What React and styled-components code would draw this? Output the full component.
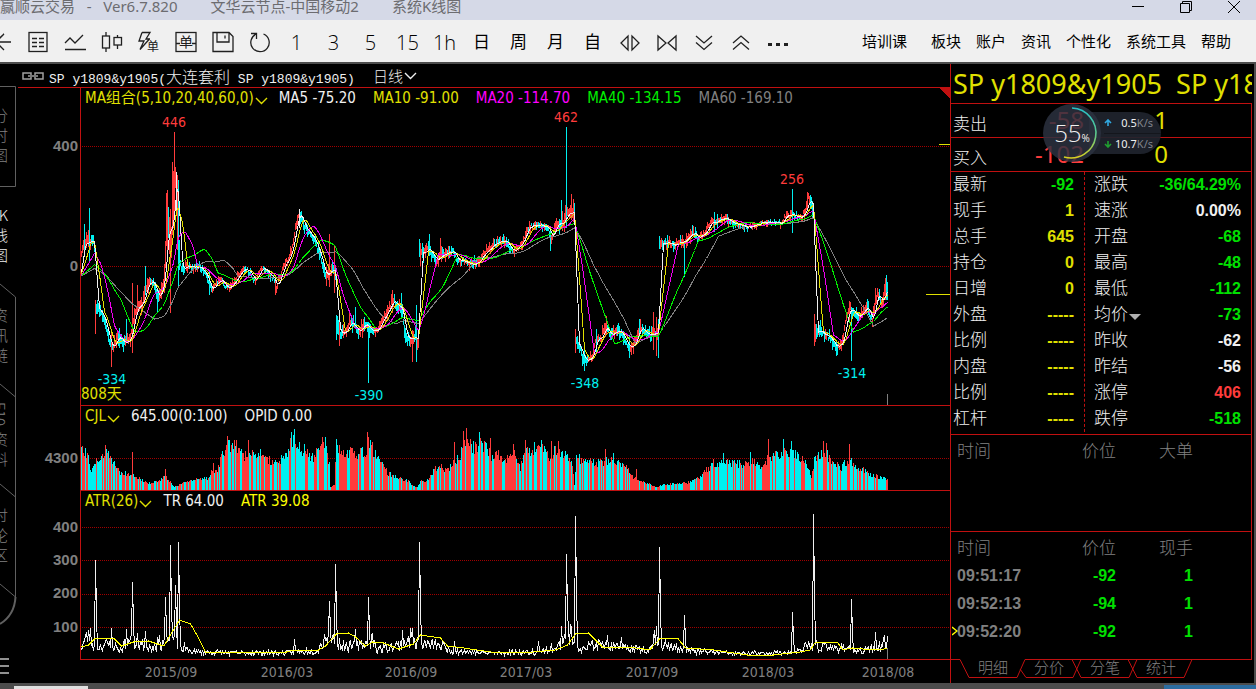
import React from 'react'
import styled, { createGlobalStyle } from 'styled-components'

const red = '#ff3c3c'
const cyan = '#00f0f0'
const line = '#c01010'
const yellow = '#e0e000'
const green = '#00e000'
const white = '#f0f0f0'
const gray = '#808080'

const latin = '"Noto Sans", "Noto Sans CJK SC", sans-serif'
const tahoma = '"DejaVu Sans Condensed", "Noto Sans", "Noto Sans CJK SC", sans-serif'
const cjk = '"Noto Sans CJK SC", sans-serif'
const arial = '"Liberation Sans", "Noto Sans CJK SC", sans-serif'

const GlobalStyle = createGlobalStyle`
  * {
    box-sizing: border-box;
  }
  body {
    margin: 0;
    background: #000;
    font-family: ${cjk};
    font-weight: 300;
  }
  button {
    padding: 0;
    border: 0;
    background: none;
    color: inherit;
    font: inherit;
    cursor: pointer;
  }
`

/* ---------- series ---------- */

const W = 869
const LEFT = 81
const DAYS = 807

const makeRandom = seed => () => {
  seed = (seed * 1664525 + 1013904223) % 4294967296
  return seed / 4294967296
}

const interpolate = (points, x) => {
  if (x <= points[0][0]) return points[0][1]
  for (let i = 1; i < points.length; i++) {
    const [x0, y0] = points[i - 1]
    const [x1, y1] = points[i]
    if (x <= x1) return y0 + ((y1 - y0) * (x - x0)) / (x1 - x0)
  }
  return points[points.length - 1][1]
}

const CLOSES = [
  [81, 255], [83, 245], [90, 241], [94, 243], [95, 305], [100, 312], [105, 323], [109, 343],
  [112, 350], [117, 337], [120, 340], [125, 343], [130, 337], [133, 320], [137, 307], [142, 303],
  [145, 290], [148, 283], [153, 283], [157, 297], [160, 293], [163, 283], [166, 243], [168, 225],
  [171, 235], [173, 205], [175, 175], [177, 190], [179, 262], [182, 270], [187, 266], [193, 267],
  [200, 268], [205, 273], [208, 283], [211, 290], [217, 283], [222, 280], [225, 287], [230, 288],
  [235, 280], [240, 273], [245, 268], [250, 273], [254, 280], [262, 268], [267, 273], [273, 277],
  [276, 287], [280, 275], [287, 260], [292, 247], [295, 227], [298, 214], [300, 216], [305, 228],
  [310, 235], [315, 242], [320, 257], [325, 277], [328, 273], [332, 270], [335, 273], [336, 323],
  [340, 333], [345, 332], [350, 321], [355, 327], [358, 333], [365, 323], [368, 328], [373, 332],
  [378, 328], [383, 318], [388, 310], [393, 300], [398, 307], [402, 310], [404, 330], [408, 340],
  [413, 337], [418, 340], [419, 250], [423, 253], [428, 248], [433, 257], [437, 262], [440, 255],
  [447, 253], [453, 252], [457, 260], [465, 262], [473, 265], [478, 262], [485, 253], [492, 245],
  [498, 242], [507, 243], [512, 252], [517, 247], [523, 240], [527, 228], [537, 225], [547, 227],
  [551, 237], [557, 225], [563, 222], [567, 213], [574, 211], [575, 340], [580, 350], [583, 358],
  [587, 362], [592, 357], [595, 340], [600, 340], [605, 327], [610, 335], [617, 330], [622, 335],
  [627, 345], [630, 348], [635, 343], [639, 328], [643, 330], [650, 335], [658, 333], [659, 243],
  [667, 243], [675, 245], [683, 242], [688, 238], [693, 233], [698, 238], [705, 232], [710, 223],
  [717, 221], [725, 217], [733, 223], [747, 227], [767, 222], [780, 223], [785, 217], [792, 214],
  [800, 219], [805, 210], [808, 199], [813, 207], [814, 333], [820, 332], [830, 338], [835, 348],
  [842, 343], [846, 317], [850, 307], [857, 317], [867, 308], [872, 321], [875, 300], [878, 294],
  [882, 303], [885, 290], [888, 288],
]

// how far a bar reaches from its close
const RANGES = [
  [81, 11], [90, 16], [100, 11], [120, 10], [135, 12], [150, 10], [160, 12], [166, 24], [176, 30],
  [180, 9], [190, 6], [280, 6], [295, 9], [310, 7], [320, 10], [335, 12], [350, 10], [380, 9],
  [404, 12], [425, 11], [437, 9], [450, 7], [520, 7], [550, 7], [565, 12], [576, 12], [590, 7],
  [610, 9], [640, 10], [655, 12], [665, 9], [680, 9], [700, 7], [715, 8], [735, 5], [780, 5],
  [800, 7], [815, 11], [840, 8], [860, 8], [880, 11], [888, 11],
]

// [x, top, bottom, colour] of the single days that stick out
const SPIKES = [
  [89, 208, 262, cyan], [84, 224, 250, cyan], [95, 300, 334, red], [111, 330, 367, red],
  [126, 319, 343, cyan], [132, 283, 353, red], [137, 285, 312, red], [145, 266, 295, cyan],
  [157, 290, 313, cyan], [166, 193, 246, red], [167, 190, 250, red], [168, 207, 238, cyan],
  [170, 209, 313, red], [172, 162, 235, red], [173, 171, 228, red], [174, 132, 220, red],
  [176, 172, 210, white], [177, 175, 250, red], [178, 180, 287, cyan], [179, 240, 270, cyan],
  [209, 272, 295, cyan], [275, 276, 295, red], [299, 209, 228, white], [329, 234, 287, red],
  [334, 245, 293, red], [336, 315, 340, cyan], [339, 316, 346, red], [355, 307, 328, cyan],
  [368, 322, 383, cyan], [392, 290, 313, red], [401, 293, 318, cyan], [412, 330, 362, red],
  [416, 305, 362, cyan], [419, 239, 257, cyan], [420, 243, 266, red], [429, 234, 256, cyan],
  [440, 238, 258, red], [550, 226, 251, cyan], [561, 200, 228, cyan], [566, 127, 228, cyan],
  [571, 194, 220, red], [573, 199, 222, red], [575, 329, 353, red], [584, 345, 371, cyan],
  [596, 329, 352, cyan], [606, 316, 335, red], [629, 335, 358, cyan], [639, 319, 334, cyan],
  [653, 312, 350, red], [656, 317, 356, red], [658, 319, 358, cyan], [659, 236, 249, cyan],
  [684, 243, 277, cyan], [714, 212, 232, cyan], [792, 189, 233, cyan], [807, 192, 210, red],
  [814, 314, 346, red], [815, 324, 342, red], [836, 340, 356, cyan], [849, 301, 320, red],
  [851, 307, 361, cyan], [875, 288, 305, red], [885, 278, 300, red], [886, 275, 300, cyan],
  [887, 282, 300, cyan],
]

const VOLUMES = [
  [81, 42], [87, 37], [91, 20], [95, 30], [100, 33], [106, 43], [110, 33], [115, 25], [121, 17],
  [133, 16], [140, 11], [150, 7], [158, 10], [165, 15], [171, 7], [174, 3], [183, 8], [193, 10],
  [200, 12], [207, 12], [212, 20], [217, 20], [222, 37], [227, 46], [237, 45], [243, 35],
  [257, 37], [267, 33], [273, 27], [283, 33], [288, 43], [293, 53], [298, 47], [307, 38],
  [313, 33], [318, 42], [325, 48], [329, 27], [330, 3], [334, 5], [336, 48], [343, 40],
  [352, 38], [366, 40], [368, 53], [373, 38], [380, 30], [387, 18], [397, 13], [408, 10],
  [413, 4], [417, 3], [420, 10], [428, 10], [432, 18], [438, 25], [447, 20], [453, 30],
  [460, 33], [463, 56], [468, 48], [475, 43], [480, 48], [487, 42], [492, 33], [498, 36],
  [503, 32], [513, 38], [520, 23], [525, 38], [532, 43], [542, 45], [548, 35], [555, 40],
  [563, 38], [572, 25], [574, 5], [576, 33], [587, 30], [600, 28], [610, 32], [623, 28],
  [628, 22], [633, 12], [647, 7], [655, 3], [667, 6], [680, 7], [690, 8], [700, 14], [707, 22],
  [713, 28], [727, 28], [740, 27], [753, 29], [761, 24], [770, 36], [783, 38], [793, 38],
  [802, 33], [811, 14], [815, 35], [825, 39], [830, 32], [840, 23], [850, 32], [860, 22],
  [870, 16], [887, 11],
]

const SPIKES_VOLUME = [
  [105, 45], [132, 38], [165, 21], [213, 27], [227, 54], [248, 50], [260, 41], [291, 58], [294, 61],
  [322, 53], [367, 58], [370, 50], [372, 48], [454, 48], [463, 59], [466, 62], [479, 58], [490, 52],
  [513, 46], [525, 50], [541, 50], [551, 49], [558, 49], [605, 41], [613, 37], [636, 21],
  [723, 37], [750, 38], [768, 51], [783, 51], [791, 49], [823, 49], [826, 47], [849, 46],
]

const RANGE_TR = [
  [81, 12], [85, 20], [89, 28], [93, 12], [110, 15], [120, 8], [127, 20], [135, 16], [150, 12],
  [165, 20], [178, 16], [181, 9], [195, 6], [240, 5], [280, 5], [300, 6], [318, 8], [325, 26],
  [336, 18], [345, 12], [360, 14], [372, 20], [377, 9], [400, 14], [410, 22], [423, 14],
  [440, 14], [450, 8], [480, 5], [540, 6], [558, 12], [572, 28], [578, 12], [605, 14],
  [620, 10], [650, 10], [656, 30], [661, 14], [680, 10], [690, 7], [740, 4], [780, 5],
  [800, 7], [810, 15], [820, 12], [830, 10], [840, 12], [847, 12], [855, 5], [870, 10],
  [880, 13], [887, 18],
]

const SPIKES_TR = [
  [95, 560], [111, 628], [126, 629], [132, 582], [137, 633], [145, 631], [165, 597], [170, 545],
  [175, 585], [178, 542], [184, 642], [294, 639], [329, 601], [335, 564], [355, 629], [368, 597],
  [372, 633], [402, 630], [412, 628], [419, 542], [454, 641], [538, 641], [551, 643], [561, 626],
  [566, 554], [571, 628], [575, 516], [592, 640], [607, 635], [621, 637], [659, 547], [668, 642],
  [684, 615], [792, 612], [813, 514], [851, 599], [875, 632],
]

const ATR = [
  [81, 647], [88, 645], [95, 638], [113, 638], [121, 646], [133, 642], [148, 641], [160, 645],
  [164, 645], [171, 633], [179, 620], [190, 624], [197, 636], [205, 652], [223, 652], [286, 652],
  [293, 650], [318, 650], [325, 646], [336, 634], [348, 633], [355, 637], [365, 646], [372, 642],
  [383, 643], [398, 649], [413, 644], [420, 635], [440, 638], [447, 646], [463, 648], [490, 652],
  [510, 653], [533, 652], [555, 650], [567, 645], [575, 634], [588, 633], [602, 647], [628, 647],
  [643, 649], [650, 649], [660, 638], [677, 638], [685, 648], [713, 650], [747, 655], [773, 655],
  [800, 652], [810, 650], [815, 642], [837, 642], [842, 650], [852, 648], [862, 649], [880, 650],
  [887, 648],
]

const days = Array.from({ length: DAYS }, (_, i) => i)

const buildCandles = () => {
  const rnd = makeRandom(11)
  const spikes = new Map(SPIKES.map(s => [s[0], s]))
  const closes = Array.from({ length: 60 }, () => 276)
  const bars = days.map(i => {
    const x = i + LEFT
    const range = interpolate(RANGES, x)
    const close = interpolate(CLOSES, x) + (rnd() - 0.5) * 4
    closes.push(close)
    const up = range * (0.2 + rnd() * rnd())
    const down = range * (0.2 + rnd() * rnd())
    const trend = interpolate(CLOSES, x + 2) - interpolate(CLOSES, x - 2)
    const color = rnd() * 8 - 4 > trend ? red : cyan
    const spike = spikes.get(x)
    return spike
      ? { i, top: spike[1], bottom: spike[2], color: spike[3] }
      : { i, top: Math.round(close - up), bottom: Math.round(close + down), color }
  })
  return { bars, closes }
}

const buildVolumes = () => {
  const rnd = makeRandom(5)
  const spikes = new Map(SPIKES_VOLUME)
  let color = red
  return days.map(i => {
    const x = i + LEFT
    const mid = interpolate(VOLUMES, x)
    if (rnd() < 0.42) color = color === red ? cyan : red
    const noisy = Math.max(1, Math.round(mid * (0.8 + rnd() * 0.32)))
    return { i, top: 490 - (spikes.get(x) || noisy), bottom: 490, color }
  })
}

const buildTr = () => {
  const rnd = makeRandom(23)
  const spikes = new Map(SPIKES_TR)
  return days.map(i => {
    const x = i + LEFT
    if (spikes.has(x)) return [x, spikes.get(x)]
    if (spikes.has(x - 1)) return [x, Math.round(659 - (659 - spikes.get(x - 1)) * 0.45)]
    const mid = interpolate(RANGE_TR, x)
    return [x, Math.round(657 - mid * (0.4 + rnd() * 0.9))]
  })
}

const sticks = (bars, color, top) =>
  bars
    .filter(b => b.color === color)
    .map(b => `M${b.i} ${b.top - top}h1V${b.bottom - top}h-1z`)
    .join('')

const polyline = (points, top) =>
  points.map(([x, y]) => `${(x - LEFT + 0.5).toFixed(1)},${(y - top).toFixed(1)}`).join(' ')

const average = (closes, n) =>
  days.map(i => {
    const part = closes.slice(61 + i - n, 61 + i)
    return [i + LEFT, part.reduce((a, b) => a + b, 0) / n]
  })

const { bars, closes } = buildCandles()
const volumes = buildVolumes()
const tr = buildTr()

const AVERAGES = [
  [60, gray],
  [40, '#00f000'],
  [20, '#f000f0'],
  [10, yellow],
  [5, white],
]

/* ---------- window frame ---------- */

const Page = styled.div`
  display: flex;
  flex-direction: column;
  min-height: 100vh;
  overflow: hidden;
  background: #000;
`

const TitleBar = styled.header`
  display: flex;
  align-items: flex-start;
  justify-content: space-between;
  height: 20px;
  overflow: hidden;
  background: #d5d9e7;
  color: #6c6c70;
  font-family: ${latin};
  font-size: 15px;
  line-height: 13px;
  font-weight: 400;
  white-space: pre;
`

const Titles = styled.div`
  display: flex;
  gap: 33px;
`

const WindowButtons = styled.div`
  display: flex;
  gap: 32px;
  padding-right: 14px;
  color: #000;
  button {
    width: 16px;
    height: 14px;
  }
  svg {
    display: block;
  }
`

const Toolbar = styled.nav`
  display: flex;
  justify-content: space-between;
  height: 44px;
  background: #f0f0f0;
  border-bottom: 2px solid #4c4c4c;
  color: #000;
`

const Tools = styled.div`
  display: flex;
`

const Tool = styled.button`
  display: flex;
  align-items: center;
  justify-content: ${p => (p.$edge ? 'flex-start' : 'center')};
  width: ${p => (p.$edge ? 19 : 37)}px;
  height: 42px;
  padding-top: ${p => (p.$digit ? 4 : 1)}px;
  font-family: "Open Sans", ${cjk};
  font-size: ${p => (p.$digit ? 20 : 17)}px;
  font-weight: ${p => (p.$digit ? 300 : 400)};
  line-height: 20px;
  svg {
    display: block;
    flex: none;
  }
`

const Menu = styled.div`
  display: flex;
  align-items: center;
  gap: 15px;
  padding: 0 25px 2px 0;
  font-size: 15px;
  font-weight: 400;
  white-space: nowrap;
  button:first-child {
    margin-right: 9px;
  }
`

const Main = styled.main`
  display: flex;
  flex: 1;
  border-right: 2px solid #4c4c4c;
`

const Footer = styled.footer`
  display: flex;
  align-items: flex-end;
  justify-content: space-between;
  height: 6px;
  padding-left: 14px;
  background: #4c4c4c;
`

const ScrollThumb = styled.div`
  width: 74px;
  height: 3px;
  background: #e0e0e0;
`

const BlueStrip = styled.div`
  width: 92px;
  height: 4px;
  background: #2c6ca0;
`

/* ---------- left rail ---------- */

const Rail = styled.aside`
  position: relative;
  display: flex;
  flex-direction: column;
  width: 18px;
  padding-top: 22px;
  overflow: hidden;
`

const RailFrame = styled.svg`
  position: absolute;
  top: 0;
  left: 0;
`

const RailTab = styled.button`
  display: flex;
  flex-direction: column;
  align-items: flex-end;
  justify-content: center;
  gap: 5px;
  width: 8px;
  height: 100px;
  padding-bottom: 4px;
  color: ${p => (p.$active ? white : gray)};
  font-size: 15px;
  line-height: 15px;
`

const Sideways = styled.span`
  writing-mode: vertical-rl;
`

/* ---------- charts ---------- */

const Charts = styled.section`
  display: flex;
  flex: 1;
  flex-direction: column;
  min-width: 0;
`

const ChartTitle = styled.div`
  display: flex;
  align-items: center;
  gap: 5px;
  height: 24px;
  padding-left: 4px;
  border-bottom: 1px solid ${line};
  color: ${white};
  font-family: "Liberation Mono", ${cjk};
  font-size: 13px;
  white-space: pre;
`

const Wide = styled.span`
  font-size: 16px;
`

const Period = styled.button`
  display: flex;
  align-items: center;
  gap: 1px;
  margin-left: 13px;
  font-size: 15px;
`

const Pane = styled.div`
  display: flex;
  height: ${p => p.$height}px;
`

const Axis = styled.div`
  position: relative;
  width: 62px;
  color: ${gray};
  font: bold 15px/16px ${arial};
`

const Tick = styled.span`
  position: absolute;
  right: 2px;
`

const Plot = styled.div`
  position: relative;
  flex: 1;
  border-left: 1px solid ${line};
  border-bottom: 1px solid ${line};
`

const Drawing = styled.svg`
  position: absolute;
  inset: 0;
  display: block;
  width: 100%;
  height: 100%;
  shape-rendering: crispEdges;
`

const Legend = styled.div`
  position: relative;
  display: flex;
  gap: 17px;
  padding-left: 4px;
  font: 400 15px/20px ${tahoma};
  white-space: nowrap;
`

const Indicator = styled.button`
  display: flex;
  align-items: center;
  gap: 1px;
  margin-right: -6px;
  color: ${yellow};
  svg {
    margin-top: 6px;
  }
`

const Entry = styled.span`
  color: ${p => p.$color};
`

const Mark = styled.span`
  position: absolute;
  color: ${p => p.$color};
  font: 400 14px/16px ${tahoma};
  transform: translate(-50%, -50%);
`

const DayCount = styled.span`
  position: absolute;
  bottom: 1px;
  left: 0;
  color: ${yellow};
  font: 400 15px/20px ${tahoma};
`

const Dates = styled.div`
  position: relative;
  height: 23px;
  margin-left: 63px;
`

const Caret = ({ color = 'currentColor' }) => (
  <svg width="13" height="8" viewBox="0 0 13 8" fill="none" stroke={color} strokeWidth="1.4">
    <path d="M1 1l5.5 5.5L12 1" />
  </svg>
)

const Grid = ({ rows }) =>
  rows.map(y => (
    <line key={y} x1="1" x2={W} y1={y + 0.5} y2={y + 0.5} stroke="#a00000" strokeDasharray="1 1" />
  ))

const LEGEND = [
  ['MA5 -75.20', white],
  ['MA10 -91.00', yellow],
  ['MA20 -114.70', '#ff00ff'],
  ['MA40 -134.15', '#00f000'],
  ['MA60 -169.10', gray],
]

const MARKS = [
  ['446', 174, 122, red],
  ['-334', 112, 379, cyan],
  ['-390', 369, 395, cyan],
  ['462', 566, 117, red],
  ['-348', 585, 383, cyan],
  ['256', 792, 179, red],
  ['-314', 852, 373, cyan],
]

const DATES = [
  ['2015/09', 171],
  ['2016/03', 287],
  ['2016/09', 411],
  ['2017/03', 526],
  ['2017/09', 652],
  ['2018/03', 768],
  ['2018/08', 888],
]

const percent = x => `${((x - LEFT) / W) * 100}%`

const PriceChart = () => (
  <Pane $height={318}>
    <Axis>
      <Tick style={{ top: 50 }}>400</Tick>
      <Tick style={{ top: 170 }}>0</Tick>
    </Axis>
    <Plot>
      <Drawing viewBox={`0 0 ${W} 317`} preserveAspectRatio="none">
        <Grid rows={[58, 178]} />
        {[red, cyan, white].map(c => (
          <path key={c} d={sticks(bars, c, 88)} fill={c} />
        ))}
        {AVERAGES.map(([n, c]) => (
          <polyline key={n} points={polyline(average(closes, n), 88)} fill="none" stroke={c} />
        ))}
        <path d="M858 56.5h11M845 206.5h24" stroke={yellow} />
        <path d="M806.5 306v11" stroke={gray} />
        <path d="M857 -1h12v12z" fill={line} />
      </Drawing>
      <Legend>
        <Indicator>
          MA组合(5,10,20,40,60,0)
          <Caret />
        </Indicator>
        {LEGEND.map(([text, color]) => (
          <Entry key={text} $color={color}>{text}</Entry>
        ))}
      </Legend>
      {MARKS.map(([text, x, y, color]) => (
        <Mark key={text} $color={color} style={{ left: percent(x), top: y - 88 }}>{text}</Mark>
      ))}
      <DayCount>808天</DayCount>
    </Plot>
  </Pane>
)

const VolumeChart = () => (
  <Pane $height={85}>
    <Axis>
      <Tick style={{ top: 44 }}>4300</Tick>
    </Axis>
    <Plot>
      <Drawing viewBox={`0 0 ${W} 84`} preserveAspectRatio="none">
        <Grid rows={[52]} />
        <path d={sticks(volumes, red, 406)} fill={red} />
        <path d={sticks(volumes, cyan, 406)} fill={cyan} />
      </Drawing>
      <Legend>
        <Indicator>
          CJL
          <Caret />
        </Indicator>
        <Entry $color={white}>645.00(0:100)</Entry>
        <Entry $color={white}>OPID 0.00</Entry>
      </Legend>
    </Plot>
  </Pane>
)

const AtrChart = () => (
  <Pane $height={169}>
    <Axis>
      {[400, 300, 200, 100].map((n, i) => (
        <Tick key={n} style={{ top: 28 + Math.floor(i * 33.4) }}>{n}</Tick>
      ))}
    </Axis>
    <Plot>
      <Drawing viewBox={`0 0 ${W} 168`} preserveAspectRatio="none">
        <Grid rows={[36, 69, 103, 136]} />
        <polyline points={polyline(tr, 491)} fill="none" stroke={white} />
        <polyline points={polyline(ATR, 491)} fill="none" stroke="#ffff00" />
        <path d="M806.5 157v11" stroke={gray} />
      </Drawing>
      <Legend>
        <Indicator>
          ATR(26)
          <Caret />
        </Indicator>
        <Entry $color={white}>TR 64.00</Entry>
        <Entry $color="#ffff00">ATR 39.08</Entry>
      </Legend>
    </Plot>
  </Pane>
)

/* ---------- quote panel ---------- */

const Quote = styled.section`
  position: relative;
  display: flex;
  flex-direction: column;
  width: 304px;
  padding-right: 2px;
  border-left: 1px solid ${line};
`

const Name = styled.h1`
  margin: 0;
  height: 40px;
  padding-left: 2px;
  overflow: hidden;
  border-bottom: 1px solid ${line};
  color: ${yellow};
  font: 400 27px/40px ${latin};
  white-space: pre;
`

const Boxed = styled.div`
  border-right: 1px solid ${line};
`

const BidAsk = styled.div`
  display: grid;
  grid-template-columns: 58px 73px 84px;
  height: 34px;
  padding-left: 2px;
  border-bottom: 1px solid ${line};
  color: ${white};
  font-size: 17px;
  line-height: 37px;
`

const Big = styled.span`
  color: ${p => p.$color};
  font: 400 24px/31px ${latin};
  text-align: right;
`

const Stats = styled.div`
  display: flex;
  padding-bottom: 2px;
  border-bottom: 1px solid ${line};
`

const StatList = styled.dl`
  flex: ${p => (p.$wide ? '1' : '0 0 134px')};
  margin: 0;
  padding: 0 10px 0 ${p => (p.$wide ? 9 : 2)}px;
  border-right: ${p => (p.$wide ? '0' : `1px dashed ${line}`)};
`

const Stat = styled.div`
  display: flex;
  justify-content: space-between;
  height: 26px;
  color: ${white};
  font-size: 17px;
  line-height: 22px;
  dd {
    margin: 0;
    color: ${p => p.$color};
    font: bold 16px/26px ${arial};
  }
`

const Down = styled.span`
  display: inline-block;
  margin-left: 1px;
  border: 6px solid transparent;
  border-top-color: #b0b0b0;
  border-bottom: 0;
`

const Deals = styled.div`
  height: ${p => p.$height}px;
  padding-top: 2px;
  border-bottom: ${p => (p.$last ? '0' : `1px solid ${line}`)};
`

const DealTable = styled.table`
  width: 242px;
  table-layout: fixed;
  border-collapse: collapse;
  color: ${green};
  text-align: right;
  font: bold 16px/28px ${arial};
  th {
    padding: 0 0 2px;
    color: ${gray};
    font: 300 17px/26px ${cjk};
  }
  td {
    padding: 0;
  }
  th:first-child,
  td:first-child {
    width: 90px;
    padding-left: 6px;
    color: ${gray};
    text-align: left;
  }
  th:nth-child(2),
  td:nth-child(2) {
    width: 75px;
  }
`

const Cursor = styled.svg`
  position: absolute;
  top: 562px;
  left: 1px;
`

const Tabs = styled.div`
  position: relative;
  display: flex;
  height: 24px;
  padding-left: 14px;
  color: ${gray};
  font-size: 15px;
  line-height: 16px;
  button {
    position: relative;
    width: 56px;
    height: 19px;
    padding-bottom: 3px;
  }
`

const TabFrame = styled.svg`
  position: absolute;
  top: 0;
  left: -6px;
`

const LEFT_STATS = [
  ['最新', '-92', green],
  ['现手', '1', yellow],
  ['总手', '645', yellow],
  ['持仓', '0', yellow],
  ['日增', '0', yellow],
  ['外盘', '-----', yellow],
  ['比例', '-----', yellow],
  ['内盘', '-----', yellow],
  ['比例', '-----', yellow],
  ['杠杆', '-----', yellow],
]

const RIGHT_STATS = [
  ['涨跌', '-36/64.29%', green],
  ['速涨', '0.00%', white],
  ['开盘', '-68', green],
  ['最高', '-48', green],
  ['最低', '-112', green],
  ['均价', '-73', green],
  ['昨收', '-62', white],
  ['昨结', '-56', white],
  ['涨停', '406', red],
  ['跌停', '-518', green],
]

const DEALS = [
  ['09:51:17', '-92', '1'],
  ['09:52:13', '-94', '1'],
  ['09:52:20', '-92', '1'],
]

const StatRows = ({ rows, wide }) => (
  <StatList $wide={wide}>
    {rows.map(([label, value, color], i) => (
      <Stat key={i} $color={color}>
        <dt>
          {label}
          {label === '均价' && <Down />}
        </dt>
        <dd>{value}</dd>
      </Stat>
    ))}
  </StatList>
)

const DealRows = ({ last, rows }) => (
  <DealTable>
    <thead>
      <tr>
        <th>时间</th>
        <th>价位</th>
        <th>{last}</th>
      </tr>
    </thead>
    <tbody>
      {rows.map(([time, price, count]) => (
        <tr key={time}>
          <td>{time}</td>
          <td>{price}</td>
          <td>{count}</td>
        </tr>
      ))}
    </tbody>
  </DealTable>
)

/* ---------- floating speed ball ---------- */

const Speed = styled.div`
  position: absolute;
  top: 40px;
  left: 92px;
  display: flex;
  align-items: center;
  width: 118px;
  height: 58px;
`

const Ball = styled.div`
  position: relative;
  z-index: 1;
  display: flex;
  align-items: center;
  justify-content: center;
  width: 58px;
  height: 58px;
  border-radius: 50%;
  background: rgba(44, 50, 64, 0.84);
  color: ${white};
  font: 300 24px/58px "Open Sans", sans-serif;
  small {
    padding-top: 9px;
    font-size: 10px;
    font-weight: 400;
  }
  svg {
    position: absolute;
    inset: 0;
  }
`

const Rates = styled.div`
  flex: 1;
  margin-left: -12px;
  padding-left: 15px;
  border-radius: 0 21px 21px 0;
  background: rgba(32, 36, 46, 0.92);
`

const Rate = styled.div`
  display: flex;
  align-items: center;
  justify-content: space-between;
  height: 21px;
  padding-right: 8px;
  border-top: ${p => (p.$second ? '1px solid #14161c' : '0')};
  color: ${white};
  font: 400 11px/20px ${latin};
  b {
    font-weight: 400;
  }
  i {
    color: #80848c;
    font-style: normal;
  }
`

const Arrow = ({ up }) => (
  <svg width="8" height="8" viewBox="0 0 8 8" fill="none" stroke={up ? '#30a8e0' : '#20a030'} strokeWidth="1.6">
    <path d={up ? 'M4 7V1M1 4l3-3 3 3' : 'M4 1v6M1 4l3 3 3-3'} />
  </svg>
)

const SpeedBall = () => (
  <Speed>
    <Ball>
      <svg width="58" height="58" viewBox="0 0 58 58" fill="none" strokeWidth="1.6">
        <defs>
          <linearGradient id="ring" x1="0" y1="0" x2="0" y2="1">
            <stop offset="0" stopColor="#28c0c8" />
            <stop offset="0.55" stopColor="#60c888" />
            <stop offset="1" stopColor="#d8d020" />
          </linearGradient>
        </defs>
        <path d="M29 4a25 25 0 1 1 -8 49" stroke="url(#ring)" />
      </svg>
      <span>55</span>
      <small>%</small>
    </Ball>
    <Rates>
      <Rate>
        <Arrow up />
        <span><b>0.5</b><i>K/s</i></span>
      </Rate>
      <Rate $second>
        <Arrow />
        <span><b>10.7</b><i>K/s</i></span>
      </Rate>
    </Rates>
  </Speed>
)

/* ---------- toolbar icons ---------- */

const Icon = ({ children, width = 22, height = 22, label }) => (
  <svg
    width={width}
    height={height}
    viewBox={`0 0 ${width} ${height}`}
    fill="none"
    stroke="#202020"
    strokeWidth="1.3"
    role="img"
    aria-label={label}
  >
    {children}
  </svg>
)

const ICON_TOOLS = [
  <Icon label="list">
    <rect x="2" y="1.500" width="18" height="19" />
    <path d="M5 7.500h5M12 7.500h5M5 11.500h5M12 11.500h5M5 15.500h5M12 15.500h5" />
  </Icon>,
  <Icon label="line">
    <path d="M1 12l5-5 5 5 8-8M1 18.500h21" />
  </Icon>,
  <Icon label="candles">
    <rect x="1.500" y="5" width="7" height="12" />
    <rect x="13" y="6.500" width="7.500" height="7.500" />
    <path d="M5 1v4M5 17v4M16.500 4v3M16.500 14v4" />
  </Icon>,
  <Icon label="quick order">
    <path d="M4 1.500h8L8 8h4M4 1.500L1 10h5L2 18.500l9-10" />
    <text x="9" y="20" fontSize="12" fill="#202020" stroke="none" fontFamily={cjk} fontWeight="400">单</text>
  </Icon>,
  <Icon label="order">
    <rect x="1" y="1.500" width="20" height="19" />
    <path d="M1 12.500h4M17 12.500h4" />
    <text x="4" y="16" fontSize="14" fill="#202020" stroke="none" fontFamily={cjk} fontWeight="400">单</text>
  </Icon>,
  <Icon label="save">
    <path d="M1 1.500h16l4 4v15H1zM5 2v9h12V2M13 4.500v3" />
  </Icon>,
  <Icon label="refresh">
    <path d="M14.500 3a9.200 9.200 0 1 1 -7 0M2 2.500h5.500V8" />
  </Icon>,
]

const TEXT_TOOLS = ['1', '3', '5', '15', '1h', '日', '周', '月', '自']

const LAST_TOOLS = [
  <Icon label="narrow">
    <path d="M9 5v14L2 12zM13 5v14l7-7z" />
  </Icon>,
  <Icon label="widen">
    <path d="M2 5v14l8-7zM20 5v14l-8-7z" />
  </Icon>,
  <Icon label="down">
    <path d="M3 5l8 7 8-7M3 11.500l8 7 8-7" />
  </Icon>,
  <Icon label="up">
    <path d="M3 12l8-7 8 7M3 18.500l8-7 8 7" />
  </Icon>,
  <Icon label="more">
    <path d="M1 13.500h4M9 13.500h4M17 13.500h4" strokeWidth="3" />
  </Icon>,
]

const MENU = ['培训课', '板块', '账户', '资讯', '个性化', '系统工具', '帮助']

const App = () => (
  <>
    <GlobalStyle />
    <Page>
      <TitleBar>
        <Titles>
          <span>赢顺云交易   -   Ver6.7.820</span>
          <span>文华云节点-中国移动2</span>
          <span>系统K线图</span>
        </Titles>
        <WindowButtons>
          <button aria-label="minimize">
            <svg width="16" height="14" stroke="#000"><path d="M2 6.500h12" /></svg>
          </button>
          <button aria-label="restore">
            <svg width="16" height="14" stroke="#000" fill="none">
              <path d="M2.500 3.500h9v9h-9zM4.500 3.500v-2h9v9h-2" />
            </svg>
          </button>
          <button aria-label="close">
            <svg width="16" height="14" stroke="#000"><path d="M2 1l12 12M14 1L2 13" /></svg>
          </button>
        </WindowButtons>
      </TitleBar>
      <Toolbar>
        <Tools>
          <Tool $edge>
            <Icon width={11} label="back">
              <path d="M0 11h11M0 6.500L4 3M-4 11L4 3M-4 11l8 8" />
            </Icon>
          </Tool>
          {ICON_TOOLS.map((icon, i) => <Tool key={i}>{icon}</Tool>)}
          {TEXT_TOOLS.map(t => <Tool key={t} $digit={/\d/.test(t)}>{t}</Tool>)}
          {LAST_TOOLS.map((icon, i) => <Tool key={i}>{icon}</Tool>)}
        </Tools>
        <Menu>{MENU.map(m => <button key={m}>{m}</button>)}</Menu>
      </Toolbar>
      <Main>
        <Rail>
          <RailFrame width="18" height="619" fill="none" stroke="#606060">
            <path d="M0 22.500h15.500v100H0M0 220l15.500 13v300M0 320l15.500 13M0 420l15.500 13M0 520l15.500 13" />
            <path d="M15.500 533q-1 18 -15.500 27" strokeWidth="2" />
            <path d="M0 595h9M0 602h9M0 609h9" stroke="#909090" strokeWidth="2" />
          </RailFrame>
          <RailTab><span>分</span><span>时</span><span>图</span></RailTab>
          <RailTab $active><span>K</span><span>线</span><span>图</span></RailTab>
          <RailTab><span>资</span><span>讯</span><span>链</span></RailTab>
          <RailTab><Sideways>F10</Sideways><span>资</span><span>料</span></RailTab>
          <RailTab><span>讨</span><span>论</span><span>区</span></RailTab>
        </Rail>
        <Charts>
          <ChartTitle>
            <svg width="22" height="8" fill="none" stroke="#a0a0a0" strokeWidth="1.500">
              <path d="M9 3V1H1v6h8V5M13 3V1h8v6h-8V5M6 4h10" />
            </svg>
            <span>
              SP y1809&amp;y1905(<Wide>大连套利</Wide> SP y1809&amp;y1905)
            </span>
            <Period>
              日线
              <Caret />
            </Period>
          </ChartTitle>
          <PriceChart />
          <VolumeChart />
          <AtrChart />
          <Dates>
            {DATES.map(([text, x]) => (
              <Mark key={text} $color={gray} style={{ left: percent(x), top: 12 }}>{text}</Mark>
            ))}
          </Dates>
        </Charts>
        <Quote>
          <Name>SP y1809&amp;y1905  SP y1809&amp;y1905</Name>
          <Boxed>
            <BidAsk>
              <span>卖出</span>
              <Big $color={red}>-58</Big>
              <Big $color={yellow}>1</Big>
            </BidAsk>
            <BidAsk>
              <span>买入</span>
              <Big $color={red}>-102</Big>
              <Big $color={yellow}>0</Big>
            </BidAsk>
            <Stats>
              <StatRows rows={LEFT_STATS} />
              <StatRows rows={RIGHT_STATS} wide />
            </Stats>
            <Deals $height={97}>
              <DealRows last="大单" rows={[]} />
            </Deals>
            <Deals $height={127} $last>
              <DealRows last="现手" rows={DEALS} />
            </Deals>
          </Boxed>
          <Cursor width="6" height="10" fill="none" stroke="#ffff00" strokeWidth="1.400">
            <path d="M0 1l5 4-5 4" />
          </Cursor>
          <Tabs>
            <TabFrame width="308" height="20" fill="none" stroke={line}>
              <path d="M0 .5h15l9 18h48l8-18h227M75 10l6 8.500h47l8-18M127 .5l9 18h48l8-18M183 .5l9 18h47l8-18" />
            </TabFrame>
            <button>明细</button>
            <button>分价</button>
            <button>分笔</button>
            <button>统计</button>
          </Tabs>
          <SpeedBall />
        </Quote>
      </Main>
      <Footer>
        <ScrollThumb />
        <BlueStrip />
      </Footer>
    </Page>
  </>
)

export default App
